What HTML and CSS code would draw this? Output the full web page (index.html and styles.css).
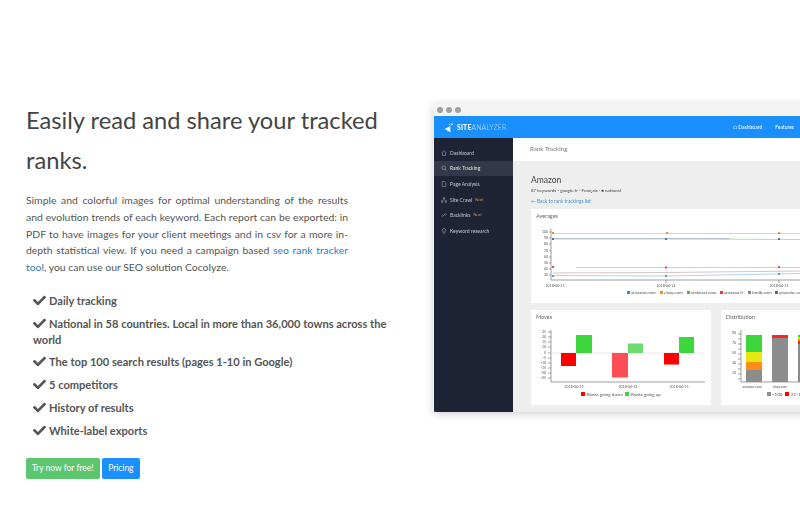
FILE: index.html
```html
<!DOCTYPE html>
<html lang="en">
<head>
<meta charset="utf-8">
<title>Site Analyzer</title>
<link rel="stylesheet" href="styles.css">
</head>
<body>
<main class="page">
  <section class="copy">
    <h2 class="title">Easily read and share your tracked ranks.</h2>
    <p class="lead">Simple and colorful images for optimal understanding of the results and evolution trends of each keyword. Each report can be exported: in PDF to have images for your client meetings and in csv for a more in-depth statistical view. If you need a campaign based <a href="#">seo rank tracker tool</a>, you can use our SEO solution Cocolyze.</p>
    <ul class="features">
      <li><svg class="check" viewBox="0 0 512 512"><path d="M174 439 7 273c-10-10-10-26 0-36l37-36c10-10 26-10 36 0l112 112L432 73c10-10 26-10 36 0l36 36c10 10 10 26 0 36L210 439c-10 10-26 10-36 0z"/></svg>Daily tracking</li>
      <li><svg class="check" viewBox="0 0 512 512"><path d="M174 439 7 273c-10-10-10-26 0-36l37-36c10-10 26-10 36 0l112 112L432 73c10-10 26-10 36 0l36 36c10 10 10 26 0 36L210 439c-10 10-26 10-36 0z"/></svg>National in 58 countries. Local in more than 36,000 towns across the world</li>
      <li><svg class="check" viewBox="0 0 512 512"><path d="M174 439 7 273c-10-10-10-26 0-36l37-36c10-10 26-10 36 0l112 112L432 73c10-10 26-10 36 0l36 36c10 10 10 26 0 36L210 439c-10 10-26 10-36 0z"/></svg>The top 100 search results (pages 1-10 in Google)</li>
      <li><svg class="check" viewBox="0 0 512 512"><path d="M174 439 7 273c-10-10-10-26 0-36l37-36c10-10 26-10 36 0l112 112L432 73c10-10 26-10 36 0l36 36c10 10 10 26 0 36L210 439c-10 10-26 10-36 0z"/></svg>5 competitors</li>
      <li><svg class="check" viewBox="0 0 512 512"><path d="M174 439 7 273c-10-10-10-26 0-36l37-36c10-10 26-10 36 0l112 112L432 73c10-10 26-10 36 0l36 36c10 10 10 26 0 36L210 439c-10 10-26 10-36 0z"/></svg>History of results</li>
      <li><svg class="check" viewBox="0 0 512 512"><path d="M174 439 7 273c-10-10-10-26 0-36l37-36c10-10 26-10 36 0l112 112L432 73c10-10 26-10 36 0l36 36c10 10 10 26 0 36L210 439c-10 10-26 10-36 0z"/></svg>White-label exports</li>
    </ul>
    <div class="actions">
      <a class="btn btn-green" href="#">Try now for free!</a>
      <a class="btn btn-blue" href="#">Pricing</a>
    </div>
  </section>

  <section class="shot">
    <div class="window">
      <div class="chrome"><i></i><i></i><i></i></div>
      <header class="app-head">
        <div class="brand">
          <svg class="brand-mark" viewBox="0 0 14 14"><path d="M1 9 8 5v8z" fill="#fff"/><circle cx="10" cy="3" r="1.2" fill="#fff"/><circle cx="7" cy="3" r=".7" fill="#fff"/></svg>
          <b>SITE</b><span>ANALYZER</span>
        </div>
        <nav class="app-nav"><span>⌂ Dashboard</span><span>Features</span></nav>
      </header>
      <div class="app-body">
        <aside class="side">
          <div class="side-item"><svg viewBox="0 0 10 10"><path d="M1 5 5 1l4 4M2.500 4.500V9h5V4.500"/></svg>Dashboard</div>
          <div class="side-item side-on"><svg viewBox="0 0 10 10"><circle cx="4.500" cy="4.500" r="3"/><path d="m7 7 2 2"/></svg>Rank Tracking</div>
          <div class="side-item"><svg viewBox="0 0 10 10"><path d="M2 1h4l2 2v6H2z"/></svg>Page Analysis</div>
          <div class="side-item"><svg viewBox="0 0 10 10"><path d="M4 1h2v3H4zM1 6h2v3H1zM7 6h2v3H7z"/></svg>Site Crawl <em>New!</em></div>
          <div class="side-item"><svg viewBox="0 0 10 10"><path d="m2 8 6-6M1 6l2-2M7 6l2-2"/></svg>Backlinks <em>New!</em></div>
          <div class="side-item"><svg viewBox="0 0 10 10"><path d="M3 6a3 3 0 1 1 4 0v1H3zM4 9h2"/></svg>Keyword research</div>
        </aside>
        <div class="content">
          <div class="crumb">Rank Tracking</div>
          <div class="panel">
            <h3 class="site-name">Amazon</h3>
            <p class="meta">87 keywords - google.fr - Français · <b>●</b> national</p>
            <p class="back">← Back to rank trackings list</p>
            <div class="card card-wide">
              <h4>Averages</h4>
              <svg class="chart" width="269" height="78" viewBox="531 224 269 78">
                <g class="axis"><path d="M551 228v51H800"/><path d="M549 231h2M549 237h2M549 243h2M549 250h2M549 256h2M549 262h2M549 268h2M549 274h2M666 279v3M779 279v3"/></g>
                <g class="ln">
                  <path stroke="#ff8c1a" d="M553 232.500H800"/>
                  <path stroke="#3cc63c" d="M553 238H666T800 238.500"/>
                  <path stroke="#8b7fb0" d="M553 237.500H730"/>
                  <path stroke="#ff6b6b" d="M576 266.500H800"/>
                  <path stroke="#a08078" d="M553 272 666 271.500 800 270"/>
                  <path stroke="#4d9de0" d="M553 274.500 666 275 800 272.500"/>
                </g>
                <g class="pt">
                  <rect fill="#ff8c1a" x="552" y="231" width="2" height="2"/><rect fill="#ff8c1a" x="666" y="231" width="2" height="2"/><rect fill="#ff8c1a" x="778" y="231" width="2" height="2"/>
                  <rect fill="#6b6b9a" x="552" y="237" width="2" height="2"/><rect fill="#6b6b9a" x="665" y="237" width="2" height="2"/><rect fill="#6b6b9a" x="778" y="237" width="2" height="2"/>
                  <rect fill="#f44" x="552" y="265" width="2" height="2"/><rect fill="#f44" x="665" y="265.500" width="2" height="2"/><rect fill="#f44" x="778" y="265" width="2" height="2"/>
                  <rect fill="#4d9de0" x="552" y="274" width="2" height="2"/><rect fill="#4d9de0" x="665" y="274" width="2" height="2"/><rect fill="#4d9de0" x="778" y="272" width="2" height="2"/>
                </g>
                <g class="tick">
                  <text x="548" y="232" text-anchor="end">100</text><text x="548" y="238" text-anchor="end">90</text><text x="548" y="244" text-anchor="end">80</text><text x="548" y="251" text-anchor="end">70</text><text x="548" y="257" text-anchor="end">60</text><text x="548" y="263" text-anchor="end">50</text><text x="548" y="269" text-anchor="end">40</text><text x="548" y="275" text-anchor="end">30</text>
                  <text x="555" y="286" text-anchor="middle">2018-04-13</text><text x="666" y="286" text-anchor="middle">2018-04-14</text><text x="779" y="286" text-anchor="middle">2018-04-15</text>
                </g>
                <g class="legend-sm">
                  <rect fill="#2b8ad8" x="627" y="290" width="3" height="3"/><text x="631" y="293">amazon.com</text>
                  <rect fill="#ff8c1a" x="660" y="290" width="3" height="3"/><text x="664" y="293">ebay.com</text>
                  <rect fill="#3cc63c" x="687" y="290" width="3" height="3"/><text x="691" y="293">walmart.com</text>
                  <rect fill="#e33" x="720" y="290" width="3" height="3"/><text x="724" y="293">amazon.fr</text>
                  <rect fill="#8b7fb0" x="748" y="290" width="3" height="3"/><text x="752" y="293">tmdb.com</text>
                  <rect fill="#8c5a50" x="775" y="290" width="3" height="3"/><text x="779" y="293">youtube.com</text>
                </g>
              </svg>
            </div>
            <div class="card-row">
              <div class="card card-moves">
                <h4>Moves</h4>
                <svg class="chart" width="180" height="79" viewBox="531 325 180 79">
                  <g class="axis"><path d="M551 329v52H705"/><path d="M548 331h3M548 336h3M548 341h3M548 346h3M548 352h3M548 357h3M548 362h3M548 367h3M548 372h3M548 377h3"/></g>
                  <path d="M551 352H705" stroke="#e8e8e8" fill="none"/>
                  <rect fill="#f00" x="561" y="352" width="15" height="13"/><rect fill="#3dd63d" x="576" y="334" width="16" height="18"/>
                  <rect fill="#ff4d55" x="612" y="352" width="16" height="24.500"/><rect fill="#6ddc6d" x="628" y="342.500" width="15" height="9.500"/>
                  <rect fill="#f00" x="664" y="352" width="15" height="11.500"/><rect fill="#3dd63d" x="679" y="336" width="15" height="16"/>
                  <g class="tick">
                    <text x="546" y="332" text-anchor="end">25</text><text x="546" y="337" text-anchor="end">20</text><text x="546" y="342" text-anchor="end">15</text><text x="546" y="347" text-anchor="end">10</text><text x="546" y="353" text-anchor="end">0</text><text x="546" y="358" text-anchor="end">-5</text><text x="546" y="363" text-anchor="end">-10</text><text x="546" y="368" text-anchor="end">-15</text><text x="546" y="373" text-anchor="end">-20</text><text x="546" y="378" text-anchor="end">-25</text>
                    <text x="574" y="387" text-anchor="middle">2018-04-13</text><text x="628" y="387" text-anchor="middle">2018-04-14</text><text x="679" y="387" text-anchor="middle">2018-04-15</text>
                  </g>
                  <g class="legend">
                    <rect fill="#f00" x="581" y="391" width="4" height="4"/><text x="587" y="395">Ranks going down</text>
                    <rect fill="#3dd63d" x="625" y="391" width="4" height="4"/><text x="631" y="395">Ranks going up</text>
                  </g>
                </svg>
              </div>
              <div class="card card-dist">
                <h4>Distribution</h4>
                <svg class="chart" width="79" height="79" viewBox="721 325 79 79">
                  <g class="axis"><path d="M741 329v52H800"/><path d="M738 333h3M738 338h3M738 343h3M738 348h3M738 353h3M738 358h3M738 363h3M738 368h3M738 373h3M738 378h3"/></g>
                  <rect fill="#3dd63d" x="746" y="334" width="16" height="17"/><rect fill="#e4ea10" x="746" y="351" width="16" height="10"/><rect fill="#ff8c1a" x="746" y="361" width="16" height="8"/><rect fill="#8c8c8c" x="746" y="369" width="16" height="12"/>
                  <rect fill="#f22" x="772" y="334" width="16" height="3"/><rect fill="#8c8c8c" x="772" y="337" width="16" height="44"/>
                  <rect fill="#3dd63d" x="798" y="334" width="2" height="2"/><rect fill="#e4ea10" x="798" y="336" width="2" height="2"/><rect fill="#ff8c1a" x="798" y="338" width="2" height="2"/><rect fill="#f22" x="798" y="340" width="2" height="3"/><rect fill="#8c8c8c" x="798" y="343" width="2" height="38"/>
                  <g class="tick">
                    <text x="736" y="333" text-anchor="end">90</text><text x="736" y="343" text-anchor="end">70</text><text x="736" y="353" text-anchor="end">50</text><text x="736" y="363" text-anchor="end">30</text><text x="736" y="373" text-anchor="end">10</text>
                    <text x="752" y="387" text-anchor="middle">amazon.com</text><text x="780" y="387" text-anchor="middle">ebay.com</text>
                  </g>
                  <g class="legend">
                    <rect fill="#8c8c8c" x="767" y="391" width="4" height="4"/><text x="772" y="395">&gt;100</text>
                    <rect fill="#f00" x="785" y="391" width="4" height="4"/><text x="791" y="395">21-100</text>
                  </g>
                </svg>
              </div>
            </div>
          </div>
        </div>
      </div>
    </div>
  </section>
</main>
</body>
</html>
```
FILE: styles.css
```css
* { box-sizing: border-box; }
html, body { margin: 0; height: 530px; overflow: hidden; background: #fff; }
body { font-family: Lato, "Open Sans", sans-serif; color: #555; }
.page { display: flex; height: 530px; padding: 0 0 0 26px; overflow: hidden; }

.copy { width: 364px; flex: none; padding-top: 100px; }
.title { margin: 0; font-size: 23.700px; font-weight: 400; line-height: 40px; color: #444; }
.lead { margin: 12px 0 0; width: 322px; font-size: 10.400px; line-height: 16.800px; text-align: justify; color: #555; }
.lead a { color: #337ab7; text-decoration: none; }
.features { list-style: none; margin: 17px 0 0; padding: 0; font-size: 11.100px; font-weight: 700; color: #555; }
.features li { margin-bottom: 7px; padding-left: 7px; line-height: 16px; }
.features li:nth-child(2) { margin-bottom: 6px; }
.check { width: 13px; height: 13px; margin-right: 3px; vertical-align: -2px; fill: #555; }
.actions { display: flex; gap: 2px; margin-top: 19px; }
.btn { display: block; height: 21px; padding: 0 6px; font-size: 8.500px; line-height: 21px; color: #fff; text-decoration: none; border-radius: 2px; }
.btn-green { background: #5cc66f; }
.btn-blue { background: #1a90ff; padding: 0 6.500px; }

.shot { flex: none; width: 410px; margin-left: 43px; padding-top: 103px; }
.window { width: 400px; height: 309px; padding-left: 1px; background: #f2f2f2; box-shadow: 0 2px 8px rgba(0,0,0,.18); filter: blur(.6px); overflow: hidden; border-radius: 3px 0 0 3px; }
.chrome { display: flex; align-items: center; gap: 3px; height: 13px; padding-left: 3px; background: #f4f4f4; }
.chrome i { width: 6px; height: 6px; border-radius: 50%; background: #a0a0a0; }
.app-head { display: flex; align-items: center; justify-content: space-between; height: 22px; background: #1a90ff; color: #fff; padding: 0 39px 0 10px; }
.brand { display: flex; align-items: center; font-size: 7px; letter-spacing: .1px; }
.brand-mark { width: 11px; height: 11px; margin-right: 2px; }
.brand span { font-weight: 300; opacity: .7; }
.app-nav { display: flex; gap: 13px; font-size: 5px; white-space: nowrap; }
.app-body { display: flex; height: 274px; }
.side { width: 79px; flex: none; background: #1f2336; padding-top: 7px; }
.side-item { display: flex; align-items: center; gap: 3px; height: 15.600px; padding-left: 7px; font-size: 5px; color: #c4c7d2; white-space: nowrap; }
.side-item svg { width: 6px; height: 6px; fill: none; stroke: #c4c7d2; stroke-width: .8; }
.side-item em { font-style: normal; font-size: 3.500px; color: #e09a40; }
.side-on { background: #343949; color: #e5e5e5; }
.content { flex: 1; background: #eee; min-width: 0; }
.crumb { height: 23px; padding-left: 17px; background: #fff; font-size: 6.200px; line-height: 22px; color: #777; }
.panel { padding: 14px 0 0 18px; }
.site-name { margin: 0; font-size: 8.500px; font-weight: 400; line-height: 10px; color: #444; }
.meta { margin: 3px 0 0; font-size: 4.500px; line-height: 6px; color: #444; }
.back { margin: 4px 0 0; font-size: 4.800px; line-height: 6px; color: #4a90d0; }
.card { background: #fff; overflow: hidden; }
.card h4 { margin: 0; padding: 4px 0 0 5px; font-size: 5.500px; font-weight: 400; line-height: 7px; color: #666; }
.card-wide { width: 269px; height: 94px; margin-top: 5px; }
.chart { display: block; margin-top: 5px; }
.card-row { display: flex; gap: 10px; margin-top: 7px; }
.card-moves { width: 180px; height: 95px; flex: none; }
.card-dist { width: 79px; height: 95px; flex: none; }
.axis path { fill: none; stroke: #777; stroke-width: .7; }
.ln path { fill: none; stroke-width: .7; opacity: .65; }
.tick text { font-size: 3.500px; fill: #555; font-family: Lato, sans-serif; }
.legend text, .legend-sm text { font-size: 4.500px; fill: #555; font-family: Lato, sans-serif; }
```
